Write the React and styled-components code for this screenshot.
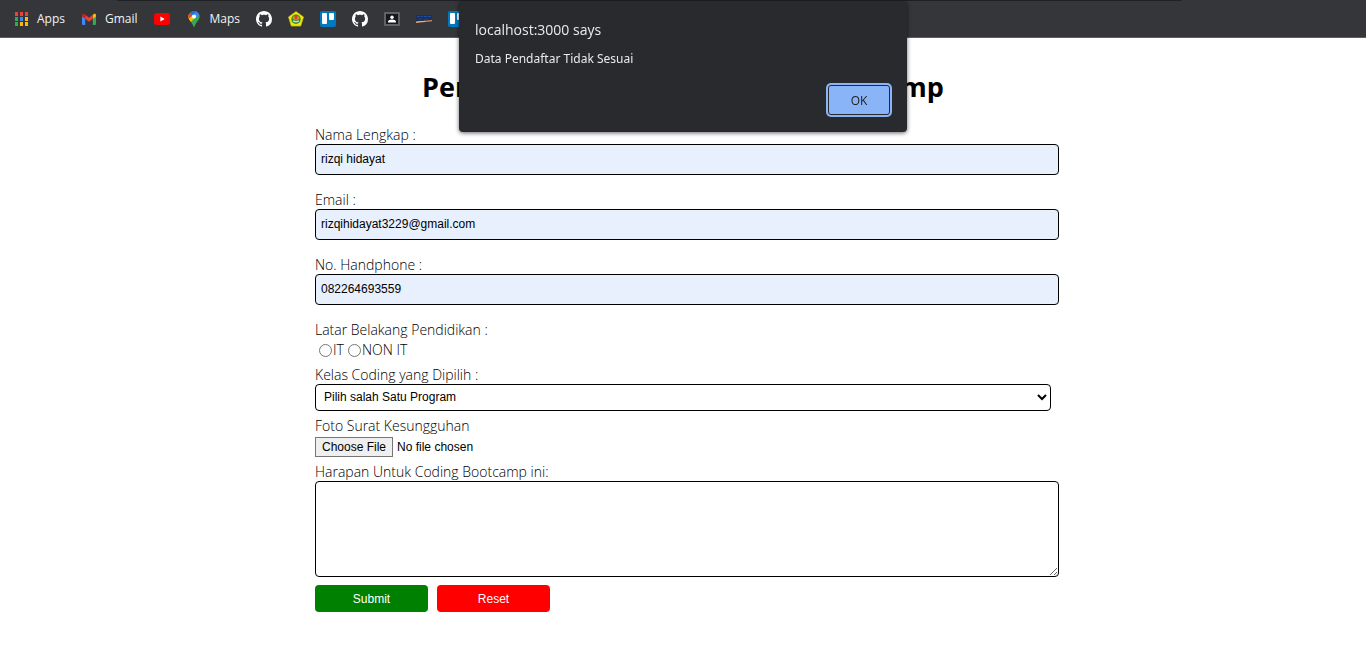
import React from "react";
import styled, { createGlobalStyle } from "styled-components";

const GlobalStyle = createGlobalStyle`
  *, *::before, *::after { box-sizing: border-box; }
  body {
    margin: 0;
    background: #fff;
    color: #000;
    font-family: "Segoe UI", "Open Sans", "Noto Sans", sans-serif;
    font-size: 14px;
    font-weight: 350;
  }
`;

const BookmarksBar = styled.nav`
  display: flex;
  align-items: center;
  gap: 16px;
  height: 38px;
  padding: 0 13px;
  border-bottom: 1px solid #5d5e61;
  background:
    linear-gradient(#202124, #202124) 117px 0 / 78% 1px no-repeat,
    #35363a;
`;

const Bookmark = styled.a`
  display: flex;
  align-items: center;
  gap: 8px;
  flex: none;
  color: #f1f3f4;
  font-size: 12px;
  font-weight: 400;
  line-height: 16px;
  text-decoration: none;

  svg { display: block; flex: none; }
`;

const Dialog = styled.section`
  position: fixed;
  top: 1px;
  left: 50%;
  transform: translateX(-50%);
  width: 448px;
  padding: 18px 16px 17px;
  border-radius: 4px;
  background: #292a2d;
  color: #e8eaed;
  font-weight: 400;
  box-shadow: 0 1px 4px rgba(0, 0, 0, 0.6);
`;

const DialogTitle = styled.h2`
  margin: 0 0 9px;
  font-size: 14px;
  font-weight: 400;
  line-height: 22px;
`;

const DialogText = styled.p`
  margin: 0;
  font-family: "Segoe UI", "Noto Sans", sans-serif;
  font-size: 12px;
  line-height: 18px;
`;

const DialogActions = styled.div`
  display: flex;
  justify-content: flex-end;
  margin-top: 17px;
`;

const OkButton = styled.button`
  width: 62px;
  height: 30px;
  margin-right: 1px;
  padding: 0;
  border: 1px solid #292a2d;
  border-radius: 3px;
  outline: 0;
  background: #8ab4f8;
  box-shadow: 0 0 0 2px #8ab4f8;
  color: #202124;
  font-family: inherit;
  font-size: 12px;
`;

const Page = styled.main`
  width: 54%;
  max-width: 736px;
  margin: 0 auto;
  padding: 28px 0 32px;
`;

const Title = styled.h1`
  margin: 0 0 18px;
  font-size: 27px;
  font-weight: 700;
  line-height: 42px;
  text-align: center;
  white-space: nowrap;
`;

const Field = styled.div`
  margin-bottom: ${(p) => (p.$gap || 6)}px;
`;

const Label = styled.label`
  display: block;
  line-height: 18px;
`;

const Choices = styled.fieldset`
  margin: 0 0 6px;
  padding: 0;
  border: 0;
`;

const Legend = styled.legend`
  padding: 0;
  line-height: 18px;
`;

const ChoiceRow = styled.div`
  display: flex;
  gap: 4px;
  padding: 1px 0 0 4px;
`;

const Choice = styled.label`
  display: flex;
  align-items: center;
  gap: 1px;
  line-height: 20px;
`;

const Radio = styled.input`
  width: 13px;
  height: 13px;
  margin: 0;
`;

const TextInput = styled.input`
  display: block;
  width: calc(100% + 8px);
  height: 31px;
  padding: 0 5px 1px;
  border: 1px solid #000;
  border-radius: 4px;
  background: #e8f0fe;
  color: #000;
  font: 12px "Liberation Sans", Arial, sans-serif;
`;

const Select = styled.select`
  display: block;
  width: 100%;
  height: 27px;
  padding: 0 4px 1px;
  border: 1px solid #000;
  border-radius: 4px;
  background: #fff;
  color: #000;
  font: 12px "Liberation Sans", Arial, sans-serif;
`;

const FileInput = styled.input`
  display: block;
  margin-top: 2px;
  height: 20px;
  font: 12px "Liberation Sans", Arial, sans-serif;

  &::file-selector-button {
    height: 20px;
    margin: 0 4px 0 0;
    padding: 0 6px;
    border: 1px solid #767676;
    border-radius: 0;
    background: #efefef;
    color: #000;
    font: inherit;
  }
`;

const TextArea = styled.textarea`
  display: block;
  width: calc(100% + 8px);
  height: 96px;
  padding: 4px;
  border: 1px solid #000;
  border-radius: 4px;
  background: #fff;
  font: 12px "Liberation Sans", Arial, sans-serif;
`;

const Actions = styled.div`
  display: flex;
  gap: 9px;
  margin-top: 8px;
`;

const ActionButton = styled.button`
  width: 113px;
  height: 27px;
  padding: 0;
  border: 0;
  border-radius: 4px;
  background: ${(p) => p.$color};
  color: #fff;
  font: 12px "Liberation Sans", Arial, sans-serif;
`;

const Icon = (props) => <svg width="16" height="16" viewBox="0 0 16 16" aria-hidden="true" {...props} />;

const appColors = ["#ea4335", "#ea4335", "#ea4335", "#34a853", "#4285f4", "#fbbc04", "#34a853", "#fbbc04", "#fbbc04"];

const AppsIcon = () => (
  <Icon>
    {appColors.map((c, i) => (
      <rect key={i} x={2 + (i % 3) * 5} y={1 + Math.floor(i / 3) * 5} width="3" height="4" fill={c} />
    ))}
  </Icon>
);

const GmailIcon = () => (
  <Icon>
    <path d="M1 4.5 4.2 7v7H2.1A1.1 1.1 0 0 1 1 12.900z" fill="#4285f4" />
    <path d="M11.800 7 15 4.500v8.400A1.100 1.100 0 0 1 13.900 14h-2.100z" fill="#34a853" />
    <path d="M11.800 3.800 12.800 3C13.800 2.300 15 3 15 4.100v1.300l-3.200 2.400z" fill="#fbbc04" />
    <path d="M4.200 7.800V3.800L8 6.700l3.800-2.900v4L8 10.700z" fill="#ea4335" />
    <path d="M1 4.100C1 3 2.200 2.300 3.200 3l1 .8v4L1 5.400z" fill="#c5221f" />
  </Icon>
);

const YouTubeIcon = () => (
  <Icon>
    <rect y="2" width="16" height="12" rx="3" fill="#f00" />
    <path d="M6.400 5.500v5L10.700 8z" fill="#fff" />
  </Icon>
);

const MapsIcon = () => (
  <Icon>
    <defs>
      <clipPath id="pin">
        <path d="M8 0a5.600 5.600 0 0 1 5.600 5.600c0 3.500-3 4.900-4.400 8.500C8.700 15.300 8.600 16 8 16s-.7-.7-1.200-1.900C5.400 10.500 2.400 9.100 2.400 5.600A5.600 5.600 0 0 1 8 0z" />
      </clipPath>
    </defs>
    <g clipPath="url(#pin)">
      <path d="M0 0h16v16H0z" fill="#34a853" />
      <path d="M2 2.500 8 5.500 3.500 11 0 8z" fill="#fbbc04" />
      <path d="m3.200 1.500 4.600 4L3 9.500 0 5z" fill="#ea4335" />
      <path d="M2 8 6.500 5 8 7.500 4.800 11.200z" fill="#fbbc04" />
      <path d="M3.600 2 8 5.700 12.700.5 8-1z" fill="#1a73e8" />
      <path d="M9.800 0 14 4 9.700 7 7 6.500z" fill="#4285f4" />
    </g>
    <circle cx="8" cy="5.600" r="2.100" fill="#fff" />
  </Icon>
);

const GitHubIcon = () => (
  <Icon>
    <path fill="#fff" d="M8 0C3.580 0 0 3.580 0 8c0 3.540 2.290 6.530 5.470 7.590.4.070.55-.17.55-.38 0-.19-.01-.82-.01-1.490-2.010.37-2.530-.49-2.690-.94-.09-.23-.48-.94-.82-1.130-.28-.15-.68-.52-.01-.53.63-.01 1.080.58 1.230.82.72 1.210 1.870.87 2.330.66.07-.52.28-.87.51-1.070-1.780-.2-3.640-.89-3.640-3.950 0-.87.31-1.590.82-2.150-.08-.2-.36-1.020.08-2.120 0 0 .67-.21 2.200.82.64-.18 1.320-.27 2-.27s1.360.09 2 .27c1.530-1.040 2.200-.82 2.200-.82.44 1.100.16 1.920.08 2.120.51.56.82 1.270.82 2.150 0 3.070-1.870 3.750-3.650 3.950.29.25.54.73.54 1.480 0 1.070-.01 1.930-.01 2.200 0 .21.15.46.55.38A8.010 8.010 0 0 0 16 8c0-4.420-3.580-8-8-8z" />
  </Icon>
);

const CampusIcon = () => (
  <Icon>
    <path d="M8 .6 15.500 6l-2.800 9H3.300L.5 6z" fill="#f4e409" stroke="#d6c400" strokeWidth=".7" />
    <circle cx="8" cy="8.200" r="4.700" fill="#2f8e3c" />
    <path d="M4.600 7.400a3.500 3.500 0 0 1 6.800 0L8 9.300z" fill="#f59a1c" />
    <path d="M8 4c1.700 1.500 1.900 2.800.8 4.300H7.200C6.100 6.800 6.500 5.400 8 4z" fill="#e4352b" />
    <path d="m5 9.200 3 1 3-1v1.200l-3 1.100-3-1.100z" fill="#dfe9d0" />
  </Icon>
);

const TrelloIcon = () => (
  <Icon>
    <rect width="16" height="16" rx="2" fill="#0079bf" />
    <rect x="2" y="2" width="5" height="11" rx="1" fill="#fff" />
    <rect x="9" y="2" width="5" height="7" rx="1" fill="#fff" />
  </Icon>
);

const ContactIcon = () => (
  <Icon>
    <rect y="1" width="16" height="14" rx="1" fill="#5f6368" />
    <rect x="2" y="3" width="12" height="10" fill="#17181a" />
    <circle cx="8" cy="6.200" r="1.700" fill="#fff" />
    <path d="M4 11.500V11c0-1.600 2-2.400 4-2.400s4 .8 4 2.400v.5z" fill="#fff" />
  </Icon>
);

const BannerIcon = () => (
  <Icon>
    <path d="M0 4h16v5L0 11z" fill="#1b3059" />
    <path d="M1 5.500h3m1 0h2m1 0h3m1 0h3" stroke="#1f4f9c" />
    <path d="M2 8h4m2 0h4" stroke="#24407a" />
    <path d="M0 10.800 16 9v1.200L0 12z" fill="#e08a4a" />
    <path d="m0 10.800 9-1v.7l-9 .9z" fill="#e8c3a0" />
  </Icon>
);

const bookmarks = [
  { icon: AppsIcon, text: "Apps" },
  { icon: GmailIcon, text: "Gmail" },
  { icon: YouTubeIcon, name: "YouTube" },
  { icon: MapsIcon, text: "Maps" },
  { icon: GitHubIcon, name: "GitHub" },
  { icon: CampusIcon, name: "Campus" },
  { icon: TrelloIcon, name: "Trello" },
  { icon: GitHubIcon, name: "GitHub" },
  { icon: ContactIcon, name: "Contacts" },
  { icon: BannerIcon, name: "Campus portal" },
  { icon: TrelloIcon, name: "Trello" },
];

const textFields = [
  { id: "nama", label: "Nama Lengkap :", type: "text", value: "rizqi hidayat" },
  { id: "email", label: "Email :", type: "email", value: "rizqihidayat3229@gmail.com" },
  { id: "hp", label: "No. Handphone :", type: "tel", value: "082264693559" },
];

export default function App() {
  return (
    <>
      <GlobalStyle />
      <BookmarksBar>
        {bookmarks.map(({ icon: Glyph, text, name }, i) => (
          <Bookmark key={i} href="#" aria-label={text || name}>
            <Glyph />
            {text}
          </Bookmark>
        ))}
      </BookmarksBar>

      <Page>
        <Title>Pendaftaran Peserta Coding Bootcamp</Title>
        <form onSubmit={(e) => e.preventDefault()}>
          {textFields.map((f) => (
            <Field key={f.id} $gap={16}>
              <Label htmlFor={f.id}>{f.label}</Label>
              <TextInput id={f.id} type={f.type} defaultValue={f.value} />
            </Field>
          ))}
          <Choices>
            <Legend>Latar Belakang Pendidikan :</Legend>
            <ChoiceRow>
              <Choice><Radio type="radio" name="latar" value="it" />IT</Choice>
              <Choice><Radio type="radio" name="latar" value="non-it" />NON IT</Choice>
            </ChoiceRow>
          </Choices>
          <Field>
            <Label htmlFor="kelas">Kelas Coding yang Dipilih :</Label>
            <Select id="kelas">
              <option>Pilih salah Satu Program</option>
            </Select>
          </Field>
          <Field>
            <Label htmlFor="foto">Foto Surat Kesungguhan</Label>
            <FileInput id="foto" type="file" />
          </Field>
          <Field>
            <Label htmlFor="harapan">Harapan Untuk Coding Bootcamp ini:</Label>
            <TextArea id="harapan" />
          </Field>
          <Actions>
            <ActionButton type="submit" $color="#008000">Submit</ActionButton>
            <ActionButton type="reset" $color="#ff0000">Reset</ActionButton>
          </Actions>
        </form>
      </Page>

      <Dialog role="alertdialog" aria-labelledby="dialog-title" aria-describedby="dialog-text">
        <DialogTitle id="dialog-title">localhost:3000 says</DialogTitle>
        <DialogText id="dialog-text">Data Pendaftar Tidak Sesuai</DialogText>
        <DialogActions>
          <OkButton type="button">OK</OkButton>
        </DialogActions>
      </Dialog>
    </>
  );
}
